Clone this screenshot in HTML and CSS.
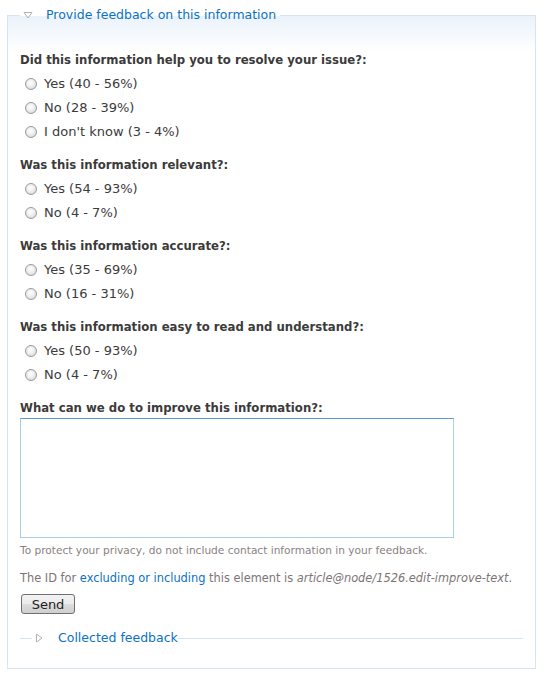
FILE: index.html
```html
<!DOCTYPE html>
<html>
<head>
<meta charset="utf-8">
<link rel="stylesheet" href="styles.css">
</head>
<body>
<fieldset class="panel">
  <legend class="panel-legend">
    <svg class="tri" width="10" height="8" viewBox="0 0 10 8"><path d="M1 1.5 H9 L5 7 Z" fill="none" stroke="#b4b4b4" stroke-width="1"/></svg><a class="legend-link" href="#">Provide feedback on this information</a>
  </legend>

  <div class="group">
    <div class="question">Did this information help you to resolve your issue?:</div>
    <label class="option"><input type="radio" name="q1"><span>Yes (40 - 56%)</span></label>
    <label class="option"><input type="radio" name="q1"><span>No (28 - 39%)</span></label>
    <label class="option"><input type="radio" name="q1"><span>I don't know (3 - 4%)</span></label>
  </div>

  <div class="group">
    <div class="question">Was this information relevant?:</div>
    <label class="option"><input type="radio" name="q2"><span>Yes (54 - 93%)</span></label>
    <label class="option"><input type="radio" name="q2"><span>No (4 - 7%)</span></label>
  </div>

  <div class="group">
    <div class="question">Was this information accurate?:</div>
    <label class="option"><input type="radio" name="q3"><span>Yes (35 - 69%)</span></label>
    <label class="option"><input type="radio" name="q3"><span>No (16 - 31%)</span></label>
  </div>

  <div class="group">
    <div class="question">Was this information easy to read and understand?:</div>
    <label class="option"><input type="radio" name="q4"><span>Yes (50 - 93%)</span></label>
    <label class="option"><input type="radio" name="q4"><span>No (4 - 7%)</span></label>
  </div>

  <div class="group text-group">
    <div class="question question-text">What can we do to improve this information?:</div>
    <textarea class="comment"></textarea>
    <div class="desc">To protect your privacy, do not include contact information in your feedback.</div>
  </div>

  <p class="idline">The ID for <a href="#">excluding or including</a> this element is <em>article@node/1526.edit-improve-text</em>.</p>

  <button class="send" type="button">Send</button>

  <fieldset class="collected">
    <legend class="collected-legend">
      <svg class="tri-right" width="8" height="10" viewBox="0 0 8 10"><path d="M1.5 1 V9 L7 5 Z" fill="none" stroke="#b4b4b4" stroke-width="1"/></svg><a class="legend-link" href="#">Collected feedback</a>
    </legend>
  </fieldset>
</fieldset>
</body>
</html>
```
FILE: styles.css
```css
html, body {
  margin: 0;
  padding: 0;
  background: #fff;
}
body {
  font-family: "DejaVu Sans", Verdana, sans-serif;
  font-size: 13px;
  color: #3b3b3b;
}
a {
  color: #0b72c4;
  text-decoration: none;
}
.panel {
  margin: 3px 7px 0 7px;
  padding: 0 12px 22px 12px;
  border: 1px solid #d5e5f2;
  background: linear-gradient(to bottom, #eaf2fa 0px, #ffffff 36px);
  min-width: 0;
}
.panel-legend {
  padding: 0 4px 0 3px;
  line-height: 24px;
  height: 24px;
  font-size: 12.5px;
}
.tri {
  display: inline-block;
  vertical-align: middle;
  margin: -2px 13px 0 0;
}
.legend-link {
  color: #0b72c4;
}
.group {
  margin-top: 9px;
}
.group:first-of-type {
  margin-top: 21px;
}
.question {
  font-family: "DejaVu Sans Condensed", "DejaVu Sans", sans-serif;
  font-stretch: condensed;
  font-weight: bold;
  line-height: 24px;
  color: #3b3b3b;
}
.option {
  display: flex;
  align-items: center;
  height: 24px;
  line-height: 24px;
  padding-left: 5px;
}
.option input {
  appearance: none;
  -webkit-appearance: none;
  width: 12px;
  height: 12px;
  margin: 0 7px 0 0;
  border: 1px solid #9a9a9a;
  border-radius: 50%;
  background: radial-gradient(circle at 45% 40%, #ffffff 0%, #f0f0f0 40%, #cfcfcf 100%);
  box-sizing: border-box;
  flex: none;
}
.text-group {
  margin-top: 11px;
}
.question-text {
  line-height: 20px;
}
.comment {
  display: block;
  box-sizing: border-box;
  width: 434px;
  height: 120px;
  margin: 0;
  padding: 2px;
  border: 1px solid #abcde9;
  border-top-color: #5b9bd1;
  resize: none;
  font-family: inherit;
}
.desc {
  margin-top: 5px;
  font-size: 10.6px;
  line-height: 14px;
  color: #8a8282;
}
.idline {
  margin: 14px 0 0 0;
  font-size: 11.4px;
  line-height: 14px;
  color: #7d7575;
  white-space: nowrap;
}
.idline em {
  font-style: italic;
}
.send {
  display: block;
  margin: 9px 0 0 1px;
  width: 54px;
  height: 20px;
  padding: 0;
  font-family: inherit;
  font-size: 13px;
  color: #222;
  border: 1px solid #707070;
  border-radius: 3px;
  background: linear-gradient(to bottom, #f2f2f2 0%, #ebebeb 50%, #dddddd 51%, #cfcfcf 100%);
}
.collected {
  margin: 16px 0 0 0;
  padding: 0;
  border: none;
  border-top: 1px solid #d5e5f2;
  min-width: 0;
}
.collected-legend {
  margin-left: 12px;
  padding: 0 0 0 3px;
  line-height: 16px;
  font-size: 12.5px;
}
.tri-right {
  display: inline-block;
  vertical-align: middle;
  margin: -2px 15px 0 0;
}
```
